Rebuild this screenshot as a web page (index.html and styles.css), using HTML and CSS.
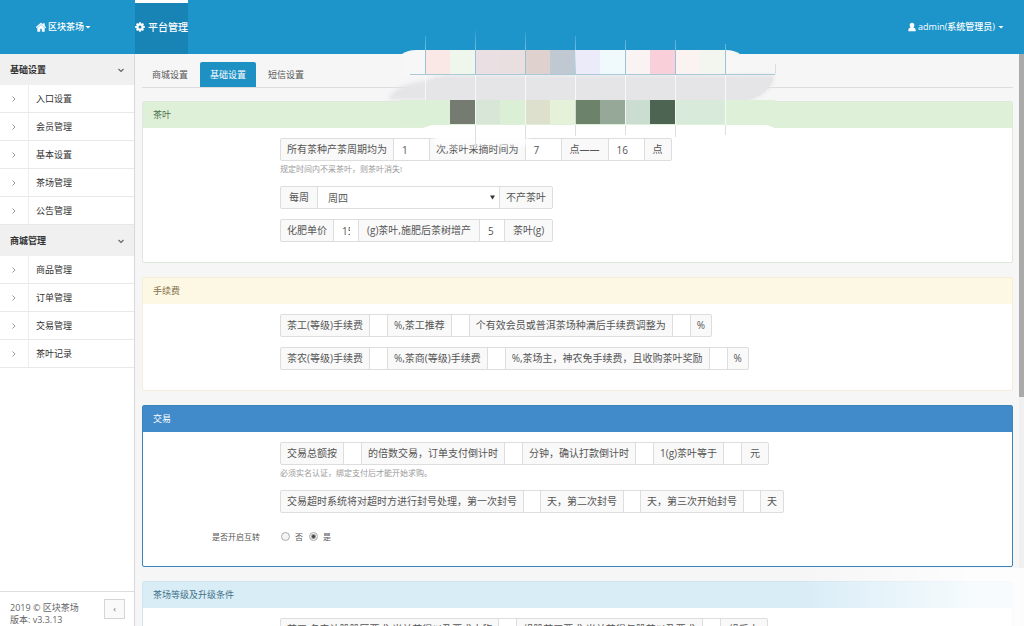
FILE: index.html
```html
<!DOCTYPE html>
<html lang="zh-CN">
<head>
<meta charset="utf-8">
<title>区块茶场</title>
<link rel="stylesheet" href="styles.css">
</head>
<body>
<svg class="defs" aria-hidden="true">
  <symbol id="right" viewBox="0 0 8 8"><path d="M2.500 1.500 5 4 2.500 6.500" fill="none" stroke="currentColor"/></symbol>
  <symbol id="down" viewBox="0 0 8 8"><path d="M1.500 3 4 5.500 6.500 3" fill="none" stroke="currentColor" stroke-width="1.200"/></symbol>
  <symbol id="caret" viewBox="0 0 8 8"><path d="M1.500 3h5L4 5.500z" fill="currentColor"/></symbol>
</svg>
<header class="topbar">
  <a class="brand" href="#"><svg class="icon" viewBox="0 0 10 10"><path d="M5 .8 0 5.200l.7.7L5 2.200l4.300 3.700.7-.7-1.500-1.300V1.400H7.200v1.400zM5 3 1.500 6v3.500H4V6.700h2v2.800h2.500V6z" fill="currentColor" stroke="currentColor" stroke-width=".4"/></svg>区块茶场<svg class="caret"><use href="#caret"/></svg></a>
  <a class="module" href="#"><svg class="icon" viewBox="0 0 10 10"><path d="M5 1.300a3.700 3.700 0 1 0 0 7.400 3.700 3.700 0 0 0 0-7.400zm0 2.200a1.500 1.500 0 1 1 0 3 1.500 1.500 0 0 1 0-3z" fill="currentColor" fill-rule="evenodd"/><path d="M5 .2v2M5 7.800v2M.2 5h2M7.800 5h2M1.600 1.600 3 3M7 7l1.400 1.400M1.600 8.400 3 7M7 3l1.400-1.400" stroke="currentColor" stroke-width="1.800"/></svg>平台管理</a>
  <a class="user" href="#"><svg class="icon" viewBox="0 0 10 10"><path d="M5 .8c1.600 0 2.400 1.100 2.300 2.600C7.200 4.500 6.700 5.200 6.300 5.600c2 .3 2.400 1.400 2.400 3.600H1.300c0-2.200.4-3.300 2.400-3.600-.4-.4-.9-1.100-1-2.200C2.600 1.900 3.400.8 5 .8z" fill="currentColor"/></svg>admin(系统管理员)<svg class="caret"><use href="#caret"/></svg></a>
</header>
<div class="shell">
  <aside class="sidebar">
    <nav class="menu">
      <button class="group" type="button">基础设置<svg class="mark"><use href="#down"/></svg></button>
      <a class="item" href="#"><span class="arrow"><svg class="mark"><use href="#right"/></svg></span>入口设置</a>
      <a class="item" href="#"><span class="arrow"><svg class="mark"><use href="#right"/></svg></span>会员管理</a>
      <a class="item" href="#"><span class="arrow"><svg class="mark"><use href="#right"/></svg></span>基本设置</a>
      <a class="item" href="#"><span class="arrow"><svg class="mark"><use href="#right"/></svg></span>茶场管理</a>
      <a class="item" href="#"><span class="arrow"><svg class="mark"><use href="#right"/></svg></span>公告管理</a>
      <button class="group" type="button">商城管理<svg class="mark"><use href="#down"/></svg></button>
      <a class="item" href="#"><span class="arrow"><svg class="mark"><use href="#right"/></svg></span>商品管理</a>
      <a class="item" href="#"><span class="arrow"><svg class="mark"><use href="#right"/></svg></span>订单管理</a>
      <a class="item" href="#"><span class="arrow"><svg class="mark"><use href="#right"/></svg></span>交易管理</a>
      <a class="item" href="#"><span class="arrow"><svg class="mark"><use href="#right"/></svg></span>茶叶记录</a>
    </nav>
    <footer class="copyright">
      <div>2019 © 区块茶场<br>版本: v3.3.13</div>
      <button class="collapse" type="button" aria-label="收起">‹</button>
    </footer>
  </aside>
  <main class="content">
    <nav class="tabs">
      <a class="tab" href="#">商城设置</a>
      <a class="tab current" href="#">基础设置</a>
      <a class="tab" href="#">短信设置</a>
    </nav>
    <section class="panel success">
      <h2 class="title">茶叶</h2>
      <div class="fields">
        <div class="line"><label class="addon" for="cycle">所有茶种产茶周期均为</label><input class="box medium" id="cycle" value="1"><label class="addon" for="from">次,茶叶采摘时间为</label><input class="box medium" id="from" value="7"><label class="addon wide" for="to">点——</label><input class="box medium" id="to" value="16"><span class="addon wide">点</span></div>
        <p class="help">规定时间内不采茶叶，则茶叶消失!</p>
        <div class="line"><label class="addon wide" for="day">每周</label><span class="picker"><select class="box day" id="day"><option>周四</option></select><svg class="pick" viewBox="0 0 5 5"><path d="M0 .5h5l-2.500 4z" fill="#333"/></svg></span><span class="addon">不产茶叶</span></div>
        <div class="line"><label class="addon" for="price">化肥单价</label><input class="box small" id="price" value="15"><label class="addon wide" for="yield">(g)茶叶,施肥后茶树增产</label><input class="box small" id="yield" value="5"><span class="addon wide">茶叶(g)</span></div>
      </div>
    </section>
    <section class="panel warning">
      <h2 class="title">手续费</h2>
      <div class="fields">
        <div class="line"><label class="addon" for="f1">茶工(等级)手续费</label><input class="box" id="f1"><label class="addon" for="f2">%,茶工推荐</label><input class="box" id="f2"><label class="addon" for="f3">个有效会员或普洱茶场种满后手续费调整为</label><input class="box" id="f3"><span class="addon">%</span></div>
        <div class="line"><label class="addon" for="f4">茶农(等级)手续费</label><input class="box" id="f4"><label class="addon" for="f5">%,茶商(等级)手续费</label><input class="box" id="f5"><label class="addon" for="f6">%,茶场主，神农免手续费，且收购茶叶奖励</label><input class="box" id="f6"><span class="addon">%</span></div>
      </div>
    </section>
    <section class="panel primary">
      <h2 class="title">交易</h2>
      <div class="fields">
        <div class="line"><label class="addon" for="t1">交易总额按</label><input class="box" id="t1"><label class="addon" for="t2">的倍数交易，订单支付倒计时</label><input class="box" id="t2"><label class="addon" for="t3">分钟，确认打款倒计时</label><input class="box" id="t3"><label class="addon" for="t4">1(g)茶叶等于</label><input class="box" id="t4"><span class="addon wide">元</span></div>
        <p class="help">必须实名认证，绑定支付后才能开始求购。</p>
        <div class="line"><label class="addon" for="t5">交易超时系统将对超时方进行封号处理，第一次封号</label><input class="box tiny" id="t5"><label class="addon" for="t6">天，第二次封号</label><input class="box tiny" id="t6"><label class="addon" for="t7">天，第三次开始封号</label><input class="box tiny" id="t7"><span class="addon">天</span></div>
      </div>
      <div class="choice" role="radiogroup" aria-labelledby="transfer"><span class="caption" id="transfer">是否开启互转</span><label class="option"><input class="radio" type="radio" name="transfer">否</label><label class="option"><input class="radio" type="radio" name="transfer" checked>是</label></div>
    </section>
    <section class="panel info">
      <h2 class="title">茶场等级及升级条件</h2>
      <div class="fields">
        <div class="line"><label class="addon" for="g1">茶工,名产认股股区要求,当前茶得以及要求人称</label><input class="box" id="g1"><label class="addon" for="g2">组股茶工要求,当前茶得与股茶以及要求</label><input class="box" id="g2"><span class="addon wide">组后人</span></div>
      </div>
    </section>
  </main>
  <div class="scroll"><div class="thumb"></div></div>
</div>
<svg class="mosaic" viewBox="380 20 420 140" aria-hidden="true">
  <defs>
    <filter id="soft" x="-10%" y="-30%" width="120%" height="160%"><feGaussianBlur stdDeviation="2"/></filter>
    <linearGradient id="rule" x1="0" y1="0" x2="0" y2="1"><stop offset="0" stop-color="#fff" stop-opacity="0"/><stop offset="1" stop-color="#9fd0e6"/></linearGradient>
  </defs>
  <path d="M402 54q6-4 14-4h310q8 0 14 4v21H402z" fill="#f7f7f8"/>
  <path d="M388 100q5-15 35-19l20-6h331q0 16-24 25z" fill="#e5e4e6" filter="url(#soft)"/>
  <path d="M435 78h338q-2 14-24 22H425z" fill="#e5e4e6"/>
  <path d="M410 74h365v1H410z" fill="#a9c9d6"/>
  <path d="M425 50h25v24h-25z" fill="#fae8e7"/><path d="M450 50h25v24h-25z" fill="#eff7ed"/>
  <path d="M475 50h25v24h-25z" fill="#eadfe2"/><path d="M500 50h25v24h-25z" fill="#e9dfe0"/>
  <path d="M525 50h25v24h-25z" fill="#dfd2ce"/><path d="M550 50h25v24h-25z" fill="#c0c8d2"/>
  <path d="M575 50h25v24h-25z" fill="#ecebfa"/><path d="M600 50h25v24h-25z" fill="#f0f9fb"/>
  <path d="M625 50h25v24h-25z" fill="#f9f3f3"/><path d="M650 50h25v24h-25z" fill="#f9d0d9"/>
  <path d="M675 50h25v24h-25z" fill="#fbf3f1"/><path d="M700 50h25v24h-25z" fill="#f3f6ee"/>
  <path d="M400 100h50v25h-50z" fill="#dcf0d7"/><path d="M450 100h25v24h-25z" fill="#757b70"/>
  <path d="M475 100h25v24h-25z" fill="#d7e6d6"/><path d="M500 100h25v24h-25z" fill="#dbefd6"/>
  <path d="M525 100h25v24h-25z" fill="#dde0cc"/><path d="M550 100h25v24h-25z" fill="#e6f1da"/>
  <path d="M575 100h25v24h-25z" fill="#6c826b"/><path d="M600 100h25v24h-25z" fill="#96a999"/>
  <path d="M625 100h25v24h-25z" fill="#cbddd0"/><path d="M650 100h25v24h-25z" fill="#4e6452"/>
  <path d="M675 100h50v24h-50z" fill="#d8ebda"/><path d="M725 100h50v24h-50z" fill="#dff0d8"/>
  <path d="M432 125h335l10 4H420z" fill="#fff"/>
  <path d="M434 129h94v16h-94z" fill="#fff" opacity=".9" filter="url(#soft)"/>
  <g fill="url(#rule)"><path d="M425 36h1v38h-1zM475 28h1v46h-1zM525 32h1v42h-1zM575 36h1v38h-1zM625 40h1v34h-1zM675 40h1v34h-1zM725 44h1v30h-1z"/></g>
  <path d="M425 50h1v24h-1zM475 50h1v24h-1zM525 50h1v24h-1zM625 50h1v24h-1zM675 50h1v24h-1zM725 50h1v24h-1z" fill="#9cc3d3"/>
  <path d="M425 75h1v25h-1zM475 75h1v50h-1zM525 75h1v50h-1zM575 75h1v50h-1zM625 75h1v50h-1zM675 75h1v50h-1zM725 75h1v50h-1z" fill="#fff" opacity=".7"/>
  <path d="M475 125h1v20h-1zM525 125h1v14h-1zM575 125h1v11h-1zM625 125h1v10h-1zM675 125h1v12h-1zM725 125h1v10h-1zM775 64h1v10h-1z" fill="#dddedf"/>
</svg>
<div class="haze"></div>
</body>
</html>
```

FILE: styles.css
```css
* { box-sizing: border-box; }
body {
  margin: 0;
  height: 100vh;
  display: flex;
  flex-direction: column;
  overflow: hidden;
  position: relative;
  background: #f6f6f7;
  color: #555;
  font: 9px/12px "Open Sans", "Noto Sans CJK SC", sans-serif;
}
a { color: inherit; text-decoration: none; }
button, input, select { font: inherit; color: inherit; }
.defs { position: absolute; width: 0; height: 0; }
.icon { width: 10px; height: 10px; flex: none; }
.caret, .mark { width: 8px; height: 8px; flex: none; }
.topbar { flex: none; height: 54px; display: flex; background: #1e95ca; color: #fff; font-weight: 500; }
.brand { width: 135px; display: flex; align-items: center; padding-left: 36px; gap: 2px; }
.brand .caret { margin-left: -2px; }
.module { display: flex; align-items: center; gap: 3px; border-top: 3px solid #fff; padding-bottom: 3px; background: #1883b5; font-size: 10px; }
.user { margin-left: auto; display: flex; align-items: center; gap: 1px; padding-right: 19px; }
.user .caret { margin-left: 1px; }
.shell { flex: 1; min-height: 0; display: flex; }
.sidebar { width: 135px; flex: none; display: flex; flex-direction: column; background: #fff; border-right: 1px solid #d8d8dc; color: #333; }
.menu { flex: 1; }
.group { width: 100%; height: 31px; display: flex; align-items: center; justify-content: space-between; padding: 0 9px 0 10px; border: 0; background: #f0f0f0; font-weight: 700; }
.group .mark { color: #666; }
.item { height: 28px; display: flex; align-items: center; border-bottom: 1px solid #e8e8e8; }
.arrow { width: 29px; height: 27px; display: flex; align-items: center; justify-content: center; border-right: 1px solid #ededed; margin-right: 7px; color: #999; }
.copyright { height: 35px; flex: none; border-top: 1px solid #ddd; display: flex; justify-content: space-between; padding: 7px 9px 0 10px; color: #666; }
.copyright div { padding-top: 3px; }
.collapse { width: 21px; height: 20px; padding: 0; border: 1px solid #d5d5d5; background: #fafafa; color: #777; }
.content { flex: 1; min-width: 0; overflow: hidden; padding: 8px 6px 0 7px; }
.tabs { display: flex; height: 26px; border-bottom: 1px solid #ddd; margin-bottom: 13px; }
.tab { height: 25px; padding: 0 10px; display: flex; align-items: center; border-radius: 2px 2px 0 0; margin-right: 2px; }
.current { background: #1e91c4; color: #fff; }
.panel { background: #fff; border: 1px solid #dfe8da; border-radius: 2px; margin-bottom: 14px; padding-bottom: 10px; }
.title { margin: 0 0 10px; padding: 0 10px; font-size: 9px; font-weight: 400; line-height: 26px; }
.success .title { background: #dff0d8; color: #4f704f; }
.warning { border-color: #f5edd6; }
.warning .title { background: #fcf8e3; color: #85704d; }
.primary { border-color: #3c83bc; }
.primary .title { background: #428bca; color: #fff; }
.info { border-color: #d0e6ef; margin-bottom: 0; }
.info .title { background: #d9edf7; color: #417187; }
.fields { padding-left: 137px; font-size: 10px; }
.line { display: flex; height: 23px; margin-bottom: 10px; }
.addon, .box { flex: none; border: 1px solid #ddd; height: 23px; margin-right: -1px; }
.addon { padding: 0 6px; line-height: 21px; background: #f9f9f9; white-space: nowrap; }
.wide { padding: 0 8px; }
.addon:first-child { border-radius: 2px 0 0 2px; }
.addon:last-child { border-radius: 0 2px 2px 0; }
.box { width: 19px; padding: 0 8px; background: #fff; border-radius: 0; outline: 0; }
.tiny { width: 18px; }
.small { width: 26px; }
.medium { width: 37px; }
.picker { position: relative; display: flex; }
.day { width: 183px; padding: 0 10px; appearance: none; }
.pick { position: absolute; right: 4px; top: 9px; width: 5px; height: 5px; pointer-events: none; }
.help { margin: -10px 0 10px; line-height: 15px; font-size: 8px; color: #999; }
.choice { display: flex; align-items: center; height: 27px; margin-bottom: 6px; padding-left: 69px; font-size: 8px; }
.caption { width: 69px; }
.option { display: flex; align-items: center; gap: 5px; margin-right: 6px; }
.radio { width: 9px; height: 9px; margin: 0; appearance: none; border: 1px solid #aaa; border-radius: 50%; background: #f4f4f4; }
.radio:checked { background: radial-gradient(circle, #444 1px, #f4f4f4 3px); }
.scroll { width: 5px; flex: none; background: #f0f0f0; }
.thumb { height: 60%; background: #aaa; }
.mosaic { position: absolute; left: 380px; top: 20px; width: 420px; height: 140px; pointer-events: none; }
.haze { position: absolute; right: 0; bottom: 0; width: 220px; height: 58px; background: linear-gradient(90deg, transparent, rgba(255, 255, 255, .8) 80%); pointer-events: none; }
```
